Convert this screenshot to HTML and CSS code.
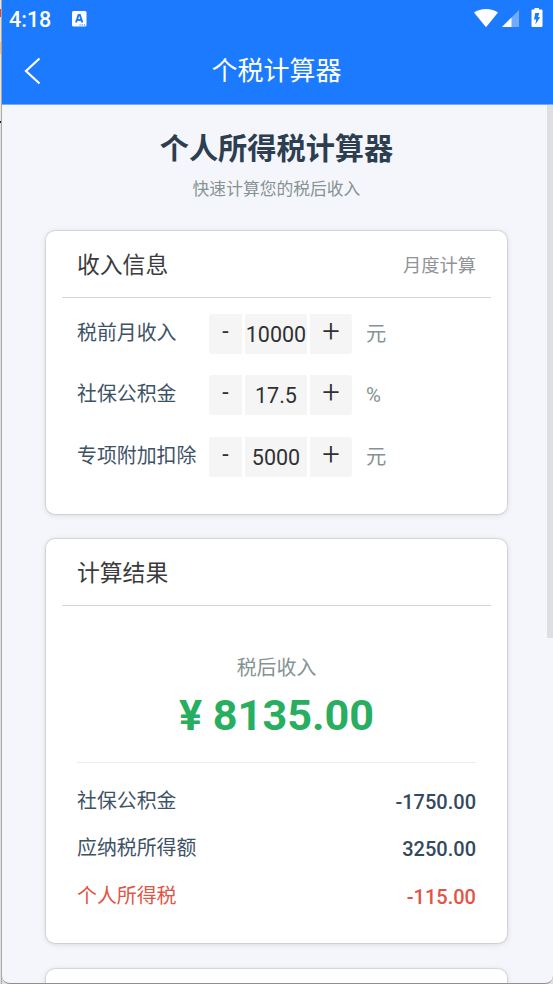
FILE: index.html
```html
<!DOCTYPE html>
<html lang="zh-CN">
<head>
<meta charset="utf-8">
<title>个税计算器</title>
<link rel="stylesheet" href="styles.css">
</head>
<body>
<div class="phone">
  <header class="appbar">
    <div class="status">
      <span class="time">4:18</span>
      <svg class="ime" width="15" height="16" viewBox="0 0 15 16"><rect width="14.5" height="15.5" rx="1.5" fill="#fff"/><path d="M4 11.5 6.500 4h1.400l2.500 7.500M5 9h4.400" fill="none" stroke="#1c7aff" stroke-width="1.900"/><path d="M7.500 14h6" stroke="#1c7aff" stroke-width="1.200" stroke-dasharray="1.2 1"/></svg>
      <svg class="signals" width="70" height="22" viewBox="0 0 70 22"><path d="M0 4.500C6-.3 18-.3 24 4.500L12 19.200Z" fill="#fff"/><path d="M45 2v17H28Z" fill="#70abff"/><path d="M37.500 9.500V19H28Z" fill="#fff"/><path d="M60.500 0h4.500v1.500h2.500q1 0 1 1V18q0 1-1 1h-9q-1 0-1-1V2.500q0-1 1-1h2Z" fill="#fff"/><path d="M61.200 5h4.200L64 9h2.200l-4.800 7.500 .8-5h-2.200Z" fill="#1c7aff"/></svg>
    </div>
    <div class="nav">
      <svg class="back" width="17" height="28" viewBox="0 0 17 28"><path d="M15.500 1.500 2 14l13.500 12.500" fill="none" stroke="#fff" stroke-width="2.200"/></svg>
      <span>个税计算器</span>
    </div>
  </header>
  <main class="page">
    <h1>个人所得税计算器</h1>
    <p class="subtitle">快速计算您的税后收入</p>

    <section class="card income">
      <div class="card-head"><h2>收入信息</h2><span>月度计算</span></div>
      <div class="field"><label>税前月收入</label><div class="stepper"><button>-</button><output>10000</output><button>+</button></div><span class="unit">元</span></div>
      <div class="field"><label>社保公积金</label><div class="stepper"><button>-</button><output>17.5</output><button>+</button></div><span class="unit">%</span></div>
      <div class="field"><label>专项附加扣除</label><div class="stepper"><button>-</button><output>5000</output><button>+</button></div><span class="unit">元</span></div>
    </section>

    <section class="card result">
      <div class="card-head"><h2>计算结果</h2></div>
      <div class="total"><div class="total-label">税后收入</div><div class="total-value">¥ 8135.00</div></div>
      <div class="line"><span>社保公积金</span><b>-1750.00</b></div>
      <div class="line"><span>应纳税所得额</span><b>3250.00</b></div>
      <div class="line tax"><span>个人所得税</span><b>-115.00</b></div>
    </section>

    <section class="card next"></section>
    <div class="scrollbar"></div>
  </main>
</div>
</body>
</html>
```
FILE: styles.css
```css
* { box-sizing: border-box; }
body {
  margin: 0;
  height: 984px;
  overflow: hidden;
  padding-left: 2px;
  background:
    linear-gradient(#a9a9a9, #a9a9a9) 1px 0 / 1px 984px no-repeat,
    linear-gradient(#e4e4e4 9px, #c0504d 9px, #c0504d 17px, #e4e4e4 17px, #e4e4e4 42px, #e8c777 42px, #e8c777 54px, #e8e8e8 54px, #e8e8e8 121px, #222 121px, #222 123px, #e0e0e0 123px);
  font-family: Roboto, "Noto Sans CJK SC", sans-serif;
}
.phone {
  height: 984px;
  overflow: hidden;
  background: #f5f6fb;
  border-bottom: 1px solid #8f8f8f;
  border-radius: 0 0 8px 8px;
}
.appbar { height: 105px; background: #1c7aff; border-bottom: 1px solid #73abfc; color: #fff; }
.status { display: flex; align-items: center; height: 38px; padding: 0 7px; }
.time { width: 63px; font-size: 21.500px; font-weight: 500; line-height: 38px; padding-top: 1px; }
.ime { margin-bottom: 1px; }
.signals { margin: -1px 2px 0 auto; }
.nav { display: flex; align-items: center; height: 66px; padding: 0 22px; font-size: 26px; }
.nav span { flex: 1; text-align: center; line-height: 38px; margin: 0 19px 0 0; }
.page { position: relative; padding: 24px 46px 0 44px; height: 879px; }
h1 { margin: 0; font-size: 29.200px; line-height: 40px; text-align: center; color: #2c3e50; }
.subtitle { margin: 7px 0 0; font-size: 16.800px; line-height: 26px; text-align: center; color: #869293; }
.card {
  height: 283px;
  margin-top: 29px;
  padding: 0 16px;
  border-radius: 9px;
  background: #fff;
  box-shadow: 0 0 1px 1px rgba(0, 0, 0, .1), 0 1px 6px rgba(0, 0, 0, .12);
}
.card-head {
  display: flex;
  align-items: center;
  justify-content: space-between;
  height: 67px;
  padding: 0 15px;
  border-bottom: 1px solid #d5d6d8;
  color: #909399;
  font-size: 18.300px;
}
h2 { margin: 0; padding-top: 3px; font-size: 22.800px; font-weight: 400; line-height: 34px; color: #3a3b3d; }
.income .card-head { margin-bottom: 16px; }
.field { display: flex; align-items: center; height: 40px; margin: 0 15px 21.400px; }
label { width: 132px; font-size: 19.900px; line-height: 30px; color: #3e5266; }
.stepper { display: grid; grid-template-columns: 33px 62px 42px; gap: 3px; height: 40px; }
button, output {
  border: 0;
  padding: 0;
  height: 40px;
  background: #f5f5f5;
  color: #303133;
  font: 21.500px/41px Roboto, sans-serif;
  text-align: center;
}
button { border-radius: 3px 0 0 3px; font-size: 23px; line-height: 36px; padding-bottom: 4px; }
button:last-child { border-radius: 0 3px 3px 0; font-size: 31px; font-weight: 300; }
.unit { margin-left: 14px; font-size: 20.300px; line-height: 30px; color: #869293; }
.result { height: 404px; margin-top: 25px; }
.total { height: 157px; margin: 0 15px 15px; padding-top: 48px; border-bottom: 1px solid #ececec; text-align: center; }
.total-label { font-size: 19.900px; line-height: 30px; color: #869293; }
.total-value { margin-top: 7px; font-size: 43.200px; line-height: 50px; font-weight: 700; color: #27ae60; }
.line { display: flex; justify-content: space-between; align-items: center; height: 47.500px; padding: 0 15px; font-size: 19.900px; line-height: 30px; color: #3e5266; }
.line b { font-weight: 500; font-size: 20px; color: #34495e; }
.line.tax, .line.tax b { color: #df5546; }
.next { margin-top: 26px; }
.scrollbar { position: absolute; top: 0; right: 0; width: 6px; height: 533px; background: #dedfe1; }
```
